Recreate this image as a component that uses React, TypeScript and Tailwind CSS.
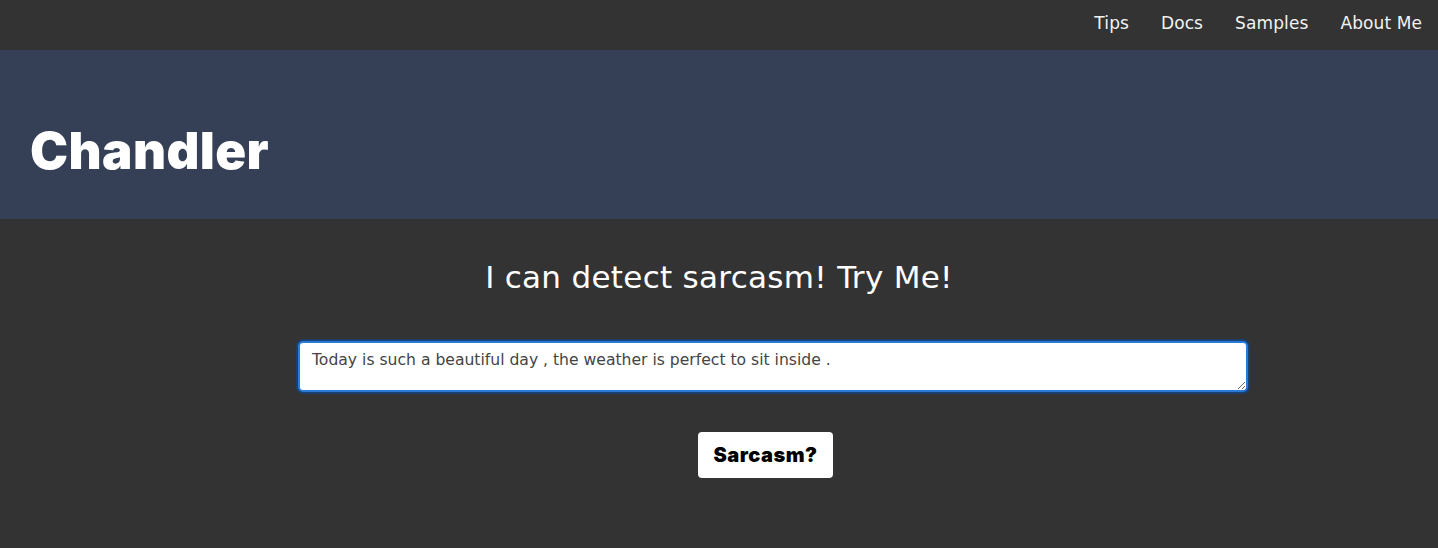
import React from "react";

const navLinks = ["Tips", "Docs", "Samples", "About Me"];

const App = () => {
  return (
    <div className="min-h-[548px] bg-[#333333] font-['DejaVu_Sans',sans-serif] text-white">
      <nav className="flex h-[50px] items-center justify-end gap-[32px] bg-[#333333] pr-4">
        {navLinks.map((link) => (
          <a key={link} href="#" className="pb-[2px] text-[17px] tracking-[0.1px] text-[#f2f2f2]">
            {link}
          </a>
        ))}
      </nav>
      <header className="flex h-[169px] items-center bg-[#353f55] pl-[30px] pt-[34px]">
        <h1 className="font-['Inter',sans-serif] text-[51px] font-black tracking-[0.4px]">
          Chandler
        </h1>
      </header>
      <main className="flex flex-col pt-[35px] pb-[70px]">
        <h2 className="text-center text-[31px] font-normal tracking-[0.3px]">
          I can detect sarcasm! Try Me!
        </h2>
        <div className="ml-[298px] mt-[40px] w-[950px]">
          <textarea
            defaultValue="Today is such a beautiful day , the weather is perfect to sit inside ."
            className="block h-[51px] w-full rounded-[5px] border-2 border-[#2a7ad8] bg-white px-3 py-[6px] text-[15.6px] text-[#444] shadow-[0_0_0_2px_#1b3f6e] outline-none"
          />
        </div>
        <div className="ml-[698px] mt-[40px]">
          <button className="h-[46px] w-[135px] rounded-[4px] bg-white font-['Inter',sans-serif] text-[20px] font-black tracking-[0.5px] text-black">
            Sarcasm?
          </button>
        </div>
      </main>
    </div>
  );
};

export default App;
